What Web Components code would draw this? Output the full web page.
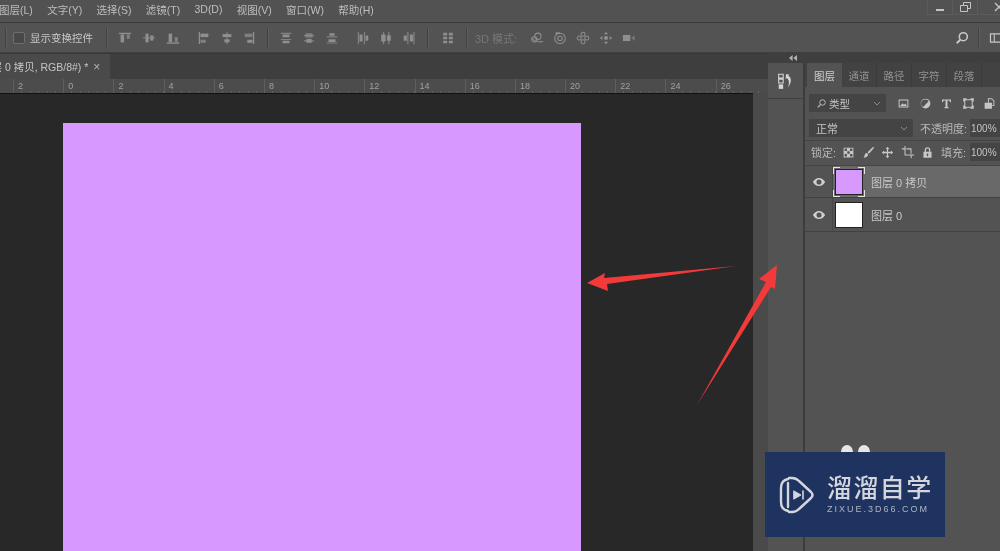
<!DOCTYPE html>
<html lang="zh">
<head>
<meta charset="utf-8">
<title>Photoshop</title>
<style>
  html, body { margin: 0; height: 100%; background: #535353; overflow: hidden; }
  body { font: 11px "Liberation Sans", "Noto Sans CJK SC", sans-serif; color: #c4c4c4; position: relative; width: 1000px; height: 551px; filter: blur(.5px); }
</style>
</head>
<body>
<ps-menubar></ps-menubar>
<ps-options></ps-options>
<ps-workspace>
  <ps-document slot="doc"></ps-document>
  <ps-dock slot="dock"></ps-dock>
</ps-workspace>
<ps-arrows></ps-arrows>
<ps-watermark></ps-watermark>

<script>
const FONT = '"Liberation Sans", "Noto Sans CJK SC", sans-serif';

// 16x16 icons, drawn in currentColor
const ICONS = {
  alignTop: '<path d="M1 2h14v1.6H1z"/><path d="M3 4h4v9H3z"/><path d="M10 4h3.5v5H10z" opacity=".75"/>',
  alignMid: '<path d="M1 7.2h14v1.4H1z" opacity=".7"/><path d="M4 3h3.5v10H4z"/><path d="M9.5 5H13v6H9.5z"/>',
  alignBot: '<path d="M1 13h14v1.6H1z"/><path d="M3 3h4v9.5H3z"/><path d="M10 7h3.5v5.5H10z" opacity=".75"/>',
  alignLeft: '<path d="M2 1h1.5v14H2z"/><path d="M4 3h9v4H4z"/><path d="M4 10h6v3.5H4z" opacity=".75"/>',
  alignCenter: '<path d="M7.3 1h1.4v14H7.3z" opacity=".7"/><path d="M3 3.5h10V7H3z"/><path d="M5 9.5h6V13H5z"/>',
  alignRight: '<path d="M12.5 1H14v14h-1.5z"/><path d="M3 3h9v4H3z" opacity=".75"/><path d="M6 10h6v3.5H6z"/>',
  distTop: '<path d="M2 2h12v1.4H2zM2 9h12v1.4H2z" opacity=".8"/><path d="M4 4h8v3H4zM4 11h8v3H4z"/>',
  distMid: '<path d="M2 4.5h12v1.4H2zM2 10.5h12v1.4H2z" opacity=".8"/><path d="M4 2.5h8v5H4z" opacity=".7"/><path d="M5 9h6v4.5H5z"/>',
  distBot: '<path d="M2 6h12v1.4H2zM2 13h12v1.4H2z" opacity=".8"/><path d="M5 2.5h6v3H5zM4 9.5h8v3H4z"/>',
  distLeft: '<path d="M2 1h1.4v14H2zM9 1h1.4v14H9z" opacity=".8"/><path d="M4 4h3.5v8H4zM11 5h3v6h-3z"/>',
  distCenter: '<path d="M4.5 1h1.4v14H4.5zM10.5 1h1.4v14h-1.4z" opacity=".8"/><path d="M2.5 4h5v8h-5zM9 5h4.5v6H9z"/>',
  distRight: '<path d="M6 1h1.4v14H6zM13 1h1.4v14H13z" opacity=".8"/><path d="M2 5h3.5v6H2zM9 4h3.5v8H9z"/>',
  autoAlign: '<path d="M2.5 2h4.5v3H2.5zM9 2h4.5v3H9zM2.5 6.5h4.5v3H2.5zM9 6.5h4.5v3H9zM2.5 11h4.5v3H2.5zM9 11h4.5v3H9z"/>',
  orbit: '<g fill="none" stroke="currentColor" stroke-width="1.2"><circle cx="9" cy="6" r="3.6"/><circle cx="5" cy="9.5" r="3"/><path d="M2 8c3 4 8 5 13 4"/></g>',
  roll: '<g fill="none" stroke="currentColor" stroke-width="1.2"><circle cx="8" cy="8.5" r="6"/><circle cx="8" cy="8.5" r="2.6"/></g><path d="M3 1.5h5v2H3z"/>',
  pan3d: '<g fill="none" stroke="currentColor" stroke-width="1.2"><rect x="5.8" y="1.5" width="4.4" height="4.4" rx="2"/><rect x="5.8" y="10.1" width="4.4" height="4.4" rx="2"/><rect x="1.5" y="5.8" width="4.4" height="4.4" rx="2"/><rect x="10.1" y="5.8" width="4.4" height="4.4" rx="2"/></g>',
  slide3d: '<path d="M8 1l2.4 2.8H5.6zM8 15l-2.4-2.8h4.8zM1 8l2.8-2.4v4.8zM15 8l-2.8 2.4V5.6z"/><circle cx="8" cy="8" r="2.4"/>',
  camera: '<path d="M1 4.5h8.5v7H1z"/><path d="M10.5 8l4-3.5v7z" opacity=".6"/>',
  search: '<circle cx="9.5" cy="6.5" r="4.6" fill="none" stroke="currentColor" stroke-width="1.8"/><path d="M6 10l-4 4" stroke="currentColor" stroke-width="2.2" fill="none"/>',
  workspace: '<path fill-rule="evenodd" d="M1 2.5h14v11H1zM2.4 4v8h3V4zM6.6 4v8h7V4z"/>',
  image: '<path fill-rule="evenodd" d="M2 3h12v10H2zM3.2 4.2v7.6h9.6V4.2z"/><path d="M4 11l2.6-3.4 2 2L10.4 8 12 11z"/>',
  adjust: '<path d="M8 2a6 6 0 1 0 0 12A6 6 0 0 0 8 2zm0 1.2c1.6 0 3 .8 3.9 2L5 12.2A4.8 4.8 0 0 1 8 3.2z"/>',
  type: '<path d="M2.5 3h11v3.4h-1.1c-.2-1.3-.7-2-2.4-2H9.2v7.4c0 .7.4.9 1.4.9v1H5.4v-1c1 0 1.4-.2 1.4-.9V4.4H6c-1.7 0-2.2.7-2.4 2H2.5z"/>',
  shape: '<path fill-rule="evenodd" d="M1.5 1.5h4v1.3h5V1.5h4v4h-1.3v5h1.3v4h-4v-1.3h-5v1.3h-4v-4h1.3v-5H1.5zM4.1 4.1v7.8h7.8V4.1z"/>',
  smart: '<path fill-rule="evenodd" d="M6 1.5h5l3 3V11H11v3.5H2V7h4zM7.2 2.7V7h3.8V10h1.8V5L10.6 2.7z"/>',
  lockPx: '<path fill-rule="evenodd" d="M2 2h12v12H2zM3.2 3.2v2.9h2.9V3.2zM9.9 3.2v2.9h2.9V3.2zM6.5 6.5v3h3v-3zM3.2 9.9v2.9h2.9V9.9zM9.9 9.9v2.9h2.9V9.9z"/>',
  brush: '<path d="M14.5 1.2c.5.4.4 1-.1 1.6L8.6 9.4 6.8 7.8l6-5.9c.7-.7 1.3-1 1.7-.7z"/><path d="M6 8.6l1.7 1.5c-.1 2.4-2.6 4.4-6 4.3 1.2-.8 1.2-1.8 1.5-3 .2-1.3 1.2-2.5 2.8-2.8z"/>',
  move: '<path d="M8 1l2.4 2.8H8.8v3.4h3.4V5.6L15 8l-2.8 2.4V8.8H8.8v3.4h1.6L8 15l-2.4-2.8h1.6V8.8H3.8v1.6L1 8l2.8-2.4v1.6h3.4V3.8H5.6z"/>',
  crop: '<path d="M4 1h1.2v9.8H15V12h-2.8v3H11v-3H4V5H1V3.8h3zM6.2 3.8H12V10h-1.2V5H6.2z"/>',
  lock: '<path fill-rule="evenodd" d="M4.6 7V5a3.4 3.4 0 0 1 6.8 0v2H13v7.5H3V7zM6.2 7h3.6V5a1.8 1.8 0 0 0-3.6 0zM8 9.2a1.2 1.2 0 0 0-.6 2.2v1.3h1.2v-1.3A1.2 1.2 0 0 0 8 9.2z"/>',
  eye: '<path fill-rule="evenodd" d="M8 3.4c3 0 5.6 1.9 7 4.6-1.4 2.7-4 4.6-7 4.6S2.4 10.7 1 8c1.4-2.7 4-4.6 7-4.6zm0 1.7a2.9 2.9 0 1 0 0 5.8 2.9 2.9 0 0 0 0-5.8z"/>',
  filter: '<circle cx="9.5" cy="6.5" r="4" fill="none" stroke="currentColor" stroke-width="1.3"/><path d="M6.5 9.5L2.5 13.5" stroke="currentColor" stroke-width="1.6" fill="none"/>',
  history: '<path d="M1.5 2h4v3.4h-4zM1.5 6.4h4v3.4h-4z" fill="none" stroke="currentColor" stroke-width="1"/><path d="M1.5 11h4v4h-4z"/><path d="M8 2l3 .2-1 1.2c3 1.4 3.4 6-.4 10.6 1.6-3.6 1.4-7-1-8.6l-1 1z"/>'
};

class PsIcon extends HTMLElement {
  connectedCallback() {
    const size = this.getAttribute('size') || 16;
    this.attachShadow({ mode: 'open' });
    this.shadowRoot.innerHTML = `
      <style>
        :host { display: block; width: ${size}px; height: ${size}px; flex: none; }
        svg { display: block; width: 100%; height: 100%; fill: currentColor; }
      </style>
      <svg viewBox="0 0 16 16">${ICONS[this.getAttribute('name')] || ''}</svg>`;
  }
}
customElements.define('ps-icon', PsIcon);

class PsMenubar extends HTMLElement {
  connectedCallback() {
    this.attachShadow({ mode: 'open' });
    const items = ['图层(L)', '文字(Y)', '选择(S)', '滤镜(T)', '3D(D)', '视图(V)', '窗口(W)', '帮助(H)'];
    this.shadowRoot.innerHTML = `
      <style>
        :host { display: flex; height: 22px; background: #525252; border-bottom: 1px solid #3b3b3b; justify-content: space-between; font: 10.5px ${FONT}; color: #bdbdbd; overflow: hidden; }
        nav { display: flex; gap: 14.3px; margin-left: -1px; align-items: center; height: 18px; }
        .win { display: flex; height: 14px; border: 1px solid #5c5c5c; border-width: 0 0 1px 1px; }
        .win span { width: 24px; display: flex; align-items: center; justify-content: center; border-right: 1px solid #5c5c5c; color: #c4c4c4; }
        .win span:last-child { border: 0; width: 22px; justify-content: flex-end; }
        svg { display: block; fill: none; stroke: currentColor; }
      </style>
      <nav>${items.map(i => `<span>${i}</span>`).join('')}</nav>
      <div class="win">
        <span><svg width="10" height="10"><path d="M1 8h8" stroke-width="2"/></svg></span>
        <span><svg width="11" height="11"><path d="M3.5 3V.5h7v6H8M.5 3.5h7v6h-7z"/></svg></span>
        <span><svg width="6" height="10"><path d="M1 1l8 8M1 9l8-8" stroke-width="1.4"/></svg></span>
      </div>`;
  }
}
customElements.define('ps-menubar', PsMenubar);

class PsOptions extends HTMLElement {
  connectedCallback() {
    this.attachShadow({ mode: 'open' });
    const icons = (list, gap) => `<div class="group" style="gap:${gap}px">${list.map(n => `<ps-icon name="${n}" size="14"></ps-icon>`).join('')}</div>`;
    this.shadowRoot.innerHTML = `
      <style>
        :host { display: flex; align-items: center; height: 29px; background: #535353; border-bottom: 1px solid #3f3f3f; font: 10.5px ${FONT}; color: #c8c8c8; }
        .div { width: 1px; height: 20px; background: #424242; border-right: 1px solid #5e5e5e; flex: none; }
        .check { width: 10px; height: 10px; border: 1px solid #6f6f6f; border-radius: 2px; background: #484848; margin: 0 5px 0 6px; flex: none; }
        .group { display: flex; align-items: center; color: #8f8f8f; }
        .dim { color: #777; margin: 0 13px 0 7px; white-space: nowrap; font-size: 11px; }
        .end { margin-left: auto; display: flex; align-items: center; color: #c8c8c8; gap: 9px; }
      </style>
      <div class="div" style="margin-left:5px"></div>
      <div class="check"></div>
      <span>显示变换控件</span>
      <div class="div" style="margin:0 10px 0 13px"></div>
      ${icons(['alignTop', 'alignMid', 'alignBot'], 10)}
      <span style="width:17px"></span>
      ${icons(['alignLeft', 'alignCenter', 'alignRight'], 8.5)}
      <div class="div" style="margin:0 10px 0 11px"></div>
      ${icons(['distTop', 'distMid', 'distBot'], 9)}
      <span style="width:17px"></span>
      ${icons(['distLeft', 'distCenter', 'distRight'], 9)}
      <div class="div" style="margin:0 12px 0 11px"></div>
      ${icons(['autoAlign'], 0)}
      <div class="div" style="margin:0 0 0 11px"></div>
      <span class="dim">3D 模式:</span>
      ${icons(['orbit', 'roll', 'pan3d', 'slide3d', 'camera'], 9)}
      <div class="end">
        <ps-icon name="search" size="14"></ps-icon>
        <div class="div" style="height:20px"></div>
        <ps-icon name="workspace" size="14" style="margin-right:-3px"></ps-icon>
      </div>`;
  }
}
customElements.define('ps-options', PsOptions);

class PsWorkspace extends HTMLElement {
  connectedCallback() {
    this.attachShadow({ mode: 'open' });
    this.shadowRoot.innerHTML = `
      <style>
        :host { display: flex; height: 499px; background: #535353; overflow: hidden; }
        ::slotted([slot=doc]) { width: 768px; flex: none; }
        ::slotted([slot=dock]) { flex: 1; min-width: 0; }
      </style>
      <slot name="doc"></slot><slot name="dock"></slot>`;
  }
}
customElements.define('ps-workspace', PsWorkspace);

class PsRuler extends HTMLElement {
  connectedCallback() {
    this.attachShadow({ mode: 'open' });
    const labels = ['2', '0', '2', '4', '6', '8', '10', '12', '14', '16', '18', '20', '22', '24', '26'];
    this.shadowRoot.innerHTML = `
      <style>
        :host { display: flex; height: 14px; padding-left: 13px; background: #4c4c4c; overflow: hidden; font: 9px ${FONT}; color: #a0a0a0; }
        span { width: 50.2px; box-sizing: border-box; flex: none; padding: 2px 0 0 4px; line-height: 10px;
          border-left: 1px solid #5e5e5e;
          background: repeating-linear-gradient(90deg, transparent 0 7.4px, #626262 7.4px 8.4px) left bottom / 100% 2px no-repeat; }
      </style>
      ${labels.map(l => `<span>${l}</span>`).join('')}`;
  }
}
customElements.define('ps-ruler', PsRuler);

class PsDocument extends HTMLElement {
  connectedCallback() {
    this.attachShadow({ mode: 'open' });
    this.shadowRoot.innerHTML = `
      <style>
        :host { display: flex; flex-direction: column; background: #4a4a4a; min-height: 0; font: 10.5px ${FONT}; }
        .tabs { height: 26px; background: #3e3e3e; flex: none; display: flex; border-top: 1px solid #3a3a3a; box-sizing: border-box; }
        .tab { width: 110px; background: #4a4a4a; color: #c6c6c6; display: flex; align-items: center; overflow: hidden; white-space: nowrap; }
        .tab b { font-weight: normal; margin-left: -19px; }
        .tab i { font-style: normal; margin-left: 5px; font-size: 12px; color: #b0b0b0; }
        .work { flex: 1; display: flex; min-height: 0; }
        .paste { width: 753px; flex: none; background: #282828; border-top: 1px solid #111; box-sizing: border-box; padding: 29px 0 0 63px; overflow: hidden; }
        .canvas { width: 518px; height: 440px; background: #d899ff; }
      </style>
      <div class="tabs"><div class="tab"><b>图层 0 拷贝, RGB/8#) *</b><i>×</i></div></div>
      <ps-ruler></ps-ruler>
      <div class="work"><div class="paste"><div class="canvas"></div></div></div>`;
  }
}
customElements.define('ps-document', PsDocument);

class PsLayerRow extends HTMLElement {
  connectedCallback() {
    this.attachShadow({ mode: 'open' });
    const active = this.hasAttribute('active');
    this.shadowRoot.innerHTML = `
      <style>
        :host { display: flex; height: ${active ? 31 : 33}px; border-bottom: 1px solid #414141; background: #535353; color: #c8c8c8; }
        .eye { width: 27px; flex: none; display: flex; align-items: center; justify-content: center; border-right: 1px solid #474747; color: #d0d0d0; }
        .main { flex: 1; display: flex; align-items: center; gap: 8px; padding-left: 2px; background: ${active ? '#696969' : '#535353'}; font-size: 11px; }
        .thumb { width: 28px; height: 26px; flex: none; background: var(--fill); border: 1px solid #222; box-sizing: border-box; position: relative; }
        /* selection corners round the active thumbnail */
        .sel::after { content: ""; position: absolute; inset: -3px -3px -3px -3px; --c: #e4e4e4;
          background:
            linear-gradient(var(--c),var(--c)) left top/7px 1px,
            linear-gradient(var(--c),var(--c)) left top/1px 7px,
            linear-gradient(var(--c),var(--c)) right top/7px 1px,
            linear-gradient(var(--c),var(--c)) right top/1px 7px,
            linear-gradient(var(--c),var(--c)) left bottom/7px 1px,
            linear-gradient(var(--c),var(--c)) left bottom/1px 7px,
            linear-gradient(var(--c),var(--c)) right bottom/7px 1px,
            linear-gradient(var(--c),var(--c)) right bottom/1px 7px;
          background-repeat: no-repeat; }
      </style>
      <div class="eye"><ps-icon name="eye" size="14"></ps-icon></div>
      <div class="main">
        <div class="thumb ${active ? 'sel' : ''}" style="--fill:${this.getAttribute('fill')}"></div>
        <span><slot></slot></span>
      </div>`;
  }
}
customElements.define('ps-layer-row', PsLayerRow);

class PsDock extends HTMLElement {
  connectedCallback() {
    this.attachShadow({ mode: 'open' });
    const tabs = ['图层', '通道', '路径', '字符', '段落'];
    const caret = '<svg width="8" height="5" viewBox="0 0 8 5"><path d="M1 1l3 3 3-3" fill="none" stroke="#8a8a8a"/></svg>';
    this.shadowRoot.innerHTML = `
      <style>
        :host { display: flex; flex-direction: column; font: 10.5px ${FONT}; color: #bdbdbd; background: #535353; min-height: 0; }
        .top { height: 10px; background: #3f3f3f; flex: none; display: flex; align-items: center; padding-left: 21px; }
        .cols { flex: 1; display: flex; min-height: 0; }
        .mini { width: 35px; flex: none; border-right: 2px solid #3d3d3d; }
        .mini div { height: 35px; display: flex; align-items: center; justify-content: center; border-bottom: 1px solid #3f3f3f; color: #d4d4d4; }
        .panel { flex: 1; min-width: 0; display: flex; flex-direction: column; }
        .tabs { height: 24px; background: #424242; display: flex; flex: none; padding-left: 2px; }
        .tabs span { width: 34px; display: flex; align-items: center; justify-content: center; color: #929292; border-right: 1px solid #3b3b3b; }
        .tabs span.on { background: #535353; color: #cfcfcf; width: 35px; border: 0; }
        .row { display: flex; align-items: center; flex: none; }
        .sel { height: 18px; background: #444; display: flex; align-items: center; justify-content: space-between; padding: 0 5px 0 7px; box-sizing: border-box; color: #c4c4c4; }
        .field { width: 30px; height: 18px; background: #444; display: flex; align-items: center; padding-left: 1px; box-sizing: border-box; flex: none; color: #c4c4c4; white-space: nowrap; overflow: hidden; font-size: 10px; }
        .icons { display: flex; align-items: center; color: #c6c6c6; }
        .lbl { color: #b8b8b8; white-space: nowrap; font-size: 11px; }
      </style>
      <div class="top"><svg width="8" height="6" viewBox="0 0 8 6" fill="#b4b4b4"><path d="M3.6 0v6L0 3zM8 0v6L4.4 3z"/></svg></div>
      <div class="cols">
        <div class="mini"><div><ps-icon name="history" size="18"></ps-icon></div></div>
        <div class="panel">
          <div class="tabs">${tabs.map((t, i) => `<span class="${i ? '' : 'on'}">${t}</span>`).join('')}</div>
          <div class="row" style="margin:7px 0 0 4px">
            <div class="sel" style="width:77px"><span style="display:flex;align-items:center;gap:2px"><ps-icon name="filter" size="11"></ps-icon>类型</span>${caret}</div>
            <div class="icons" style="gap:8.5px;margin-left:11px">
              <ps-icon name="image" size="13"></ps-icon><ps-icon name="adjust" size="13"></ps-icon><ps-icon name="type" size="13"></ps-icon><ps-icon name="shape" size="13"></ps-icon><ps-icon name="smart" size="13"></ps-icon>
            </div>
          </div>
          <div class="row" style="margin:7px 0 0 4px">
            <div class="sel" style="width:104px;font-size:11px"><span>正常</span>${caret}</div>
            <span class="lbl" style="margin:0 1px 0 7px">不透明度:</span>
            <div class="field" style="margin-left:auto">100%</div>
          </div>
          <div class="row" style="margin-top:3px;height:22px;border-top:1px solid #444;padding-left:6px">
            <span class="lbl">锁定:</span>
            <div class="icons" style="gap:6.5px;margin-left:6px">
              <ps-icon name="lockPx" size="13"></ps-icon><ps-icon name="brush" size="13"></ps-icon><ps-icon name="move" size="13"></ps-icon><ps-icon name="crop" size="14"></ps-icon><ps-icon name="lock" size="13"></ps-icon>
            </div>
            <span class="lbl" style="margin:0 2px 0 7px">填充:</span>
            <div class="field" style="margin-left:auto">100%</div>
          </div>
          <div style="margin-top:2px;border-top:1px solid #444">
            <ps-layer-row active fill="#d899ff">图层 0 拷贝</ps-layer-row>
            <ps-layer-row fill="#ffffff">图层 0</ps-layer-row>
          </div>
        </div>
      </div>`;
  }
}
customElements.define('ps-dock', PsDock);

// red annotation arrows, drawn over the page
class PsArrows extends HTMLElement {
  connectedCallback() {
    this.attachShadow({ mode: 'open' });
    this.shadowRoot.innerHTML = `
      <style>
        :host { position: absolute; inset: 0; pointer-events: none; }
        svg { display: block; }
      </style>
      <svg width="1000" height="551" fill="#f23a3a">
        <polygon points="587,283 605,273 604,278 736,266 607,284 608,291"/>
        <polygon points="777,265 759,279 766,282 697,405 771,287 775,289"/>
      </svg>`;
  }
}
customElements.define('ps-arrows', PsArrows);

class PsWatermark extends HTMLElement {
  connectedCallback() {
    this.attachShadow({ mode: 'open' });
    this.shadowRoot.innerHTML = `
      <style>
        :host { position: absolute; left: 765px; top: 452px; width: 180px; height: 85px; background: #1f3360; display: flex; align-items: center; color: #d3d6dd; }
        .dots { position: absolute; left: 76px; top: -7px; height: 7px; overflow: hidden; display: flex; gap: 5px; }
        .dots i { width: 12px; height: 14px; border-radius: 50%; background: #e6e6e6; }
        svg { flex: none; margin-left: 14px; }
        .txt { margin-left: 12px; display: flex; flex-direction: column; }
        .cn { font: 500 25px/26px "Liberation Sans", "Noto Sans CJK SC", sans-serif; letter-spacing: 1.4px; }
        .en { font: 9px/10px "Liberation Sans", sans-serif; letter-spacing: 2px; color: #aeb4c4; margin-top: 3px; white-space: nowrap; }
      </style>
      <div class="dots"><i></i><i></i></div>
      <svg width="36" height="38" viewBox="0 0 36 38" fill="none" stroke="#d3d6dd" stroke-width="2.4" stroke-linejoin="round" stroke-linecap="round">
        <path d="M10 2h3c3 0 5 1 7 3l12 11c2 2 2 4 0 6L20 33c-2 2-4 3-7 3h-3"/>
        <path d="M9 3C4 4 2 8 2 12v14c0 4 2 8 7 9"/>
        <path d="M9 7v24" />
        <path d="M15 15l7 4-7 4z" fill="#d3d6dd" stroke-width="1"/>
        <path d="M24 15v8" stroke-width="1.6"/>
      </svg>
      <div class="txt"><span class="cn">溜溜自学</span><span class="en">ZIXUE.3D66.COM</span></div>`;
  }
}
customElements.define('ps-watermark', PsWatermark);
</script>
</body>
</html>
